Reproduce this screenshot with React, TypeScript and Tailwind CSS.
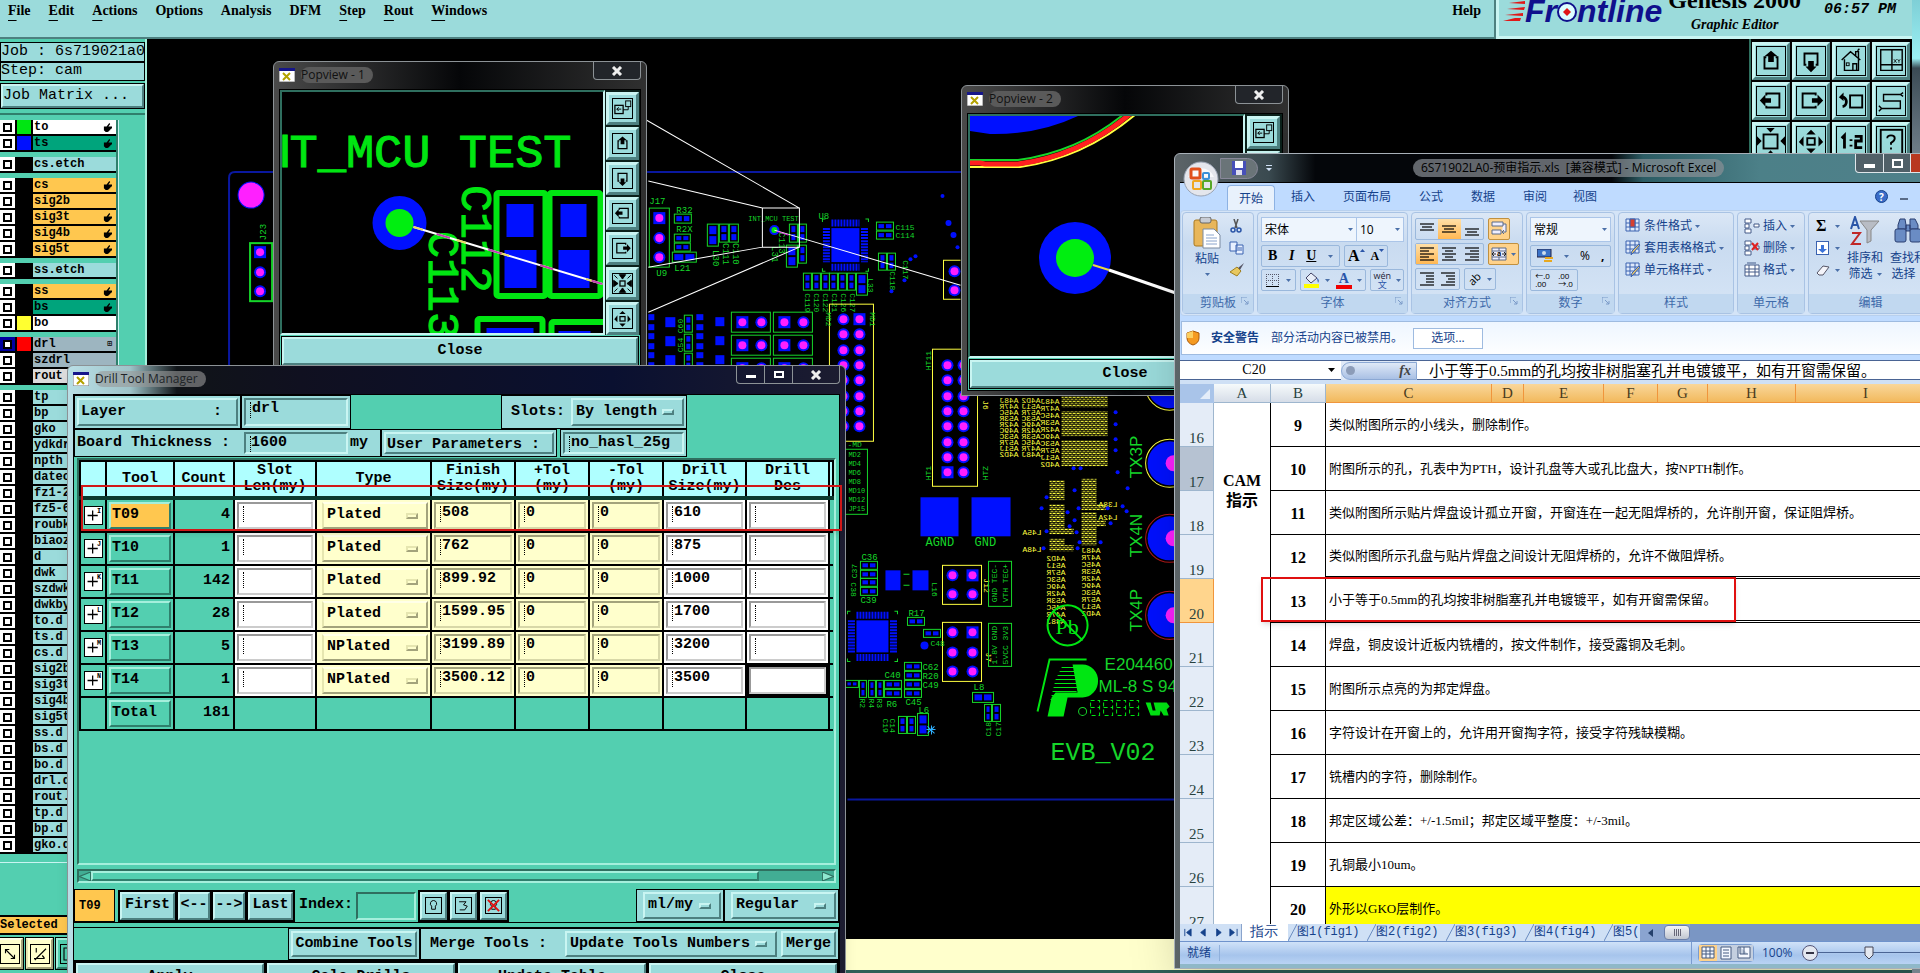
import type { ReactNode } from "react";

const raised =
  "border-2 border-t-[#c9f5f2] border-l-[#c9f5f2] border-b-[#4d8080] border-r-[#4d8080] bg-[#9bdbdb]";
const raisedTeal =
  "border-2 border-t-[#a5efdc] border-l-[#a5efdc] border-b-[#2f7f6c] border-r-[#2f7f6c] bg-[#53cfb0]";
const raisedCream =
  "border-2 border-t-[#ffffe8] border-l-[#e6e6b0] border-b-[#a3a37c] border-r-[#a3a37c] bg-[#ffffcc]";
const sunken =
  "border-2 border-t-[#4d8080] border-l-[#4d8080] border-b-[#c9f5f2] border-r-[#c9f5f2] bg-[#9bdbdb]";
const mono = "font-['Liberation_Mono',monospace]";
const song = "font-['Liberation_Serif','Noto_Sans_CJK_SC',serif]";
const yahei = "font-['Open_Sans','Noto_Sans_CJK_SC',sans-serif]";

const menus = [
  ["F", "ile"],
  ["E", "dit"],
  ["A", "ctions"],
  ["", "Options"],
  ["", "Analysis"],
  ["", "DFM"],
  ["S", "tep"],
  ["R", "out"],
  ["W", "indows"],
];

type Layer = { name: string; bg: string; swatch?: string; hand?: boolean; on?: boolean };

const white = "bg-white";
const green = "bg-[#00a47c]";
const aqua = "bg-[#9bdbdb]";
const orange = "bg-[#ffc74f]";
const gray = "bg-[#9db5c0]";

const layerGroups: Layer[][] = [
  [
    { name: "to", bg: white, swatch: "bg-[#00e612]", hand: true },
    { name: "ts", bg: green, swatch: "bg-[#0010ff]", hand: true },
  ],
  [{ name: "cs.etch", bg: aqua }],
  [
    { name: "cs", bg: orange, hand: true },
    { name: "sig2b", bg: orange },
    { name: "sig3t", bg: orange, hand: true },
    { name: "sig4b", bg: orange, hand: true },
    { name: "sig5t", bg: orange, hand: true },
  ],
  [{ name: "ss.etch", bg: aqua }],
  [
    { name: "ss", bg: orange, hand: true },
    { name: "bs", bg: green, hand: true },
    { name: "bo", bg: white, swatch: "bg-[#ffff30]" },
  ],
  [
    { name: "drl", bg: gray, swatch: "bg-[#ff0000]", on: true },
    { name: "szdrl", bg: gray },
    { name: "rout", bg: "bg-[#dcdcdc]" },
  ],
  [
    "tp", "bp", "gko", "ydkdr", "npth", "datecode", "fz1-2", "fz5-6", "roubk", "biaozhu",
    "d", "dwk", "szdwk", "dwkby", "to.d", "ts.d", "cs.d", "sig2b.d", "sig3t.d", "sig4b.d",
    "sig5t.d", "ss.d", "bs.d", "bo.d", "drl.d", "rout.d", "tp.d", "bp.d", "gko.d",
  ].map((name) => ({ name, bg: aqua })),
];

const tools = [
  { id: "T09", mark: "I", count: 4, type: "Plated", finish: "508", drill: "610" },
  { id: "T10", mark: "J", count: 1, type: "Plated", finish: "762", drill: "875" },
  { id: "T11", mark: "K", count: 142, type: "Plated", finish: "899.92", drill: "1000" },
  { id: "T12", mark: "L", count: 28, type: "Plated", finish: "1599.95", drill: "1700" },
  { id: "T13", mark: "M", count: 5, type: "NPlated", finish: "3199.89", drill: "3200" },
  { id: "T14", mark: "N", count: 1, type: "NPlated", finish: "3500.12", drill: "3500" },
];

const notes = [
  "类似附图所示的小线头，删除制作。",
  "附图所示的孔，孔表中为PTH，设计孔盘等大或孔比盘大，按NPTH制作。",
  "类似附图所示贴片焊盘设计孤立开窗，开窗连在一起无阻焊桥的，允许削开窗，保证阻焊桥。",
  "类似附图所示孔盘与贴片焊盘之间设计无阻焊桥的，允许不做阻焊桥。",
  "小于等于0.5mm的孔均按非树脂塞孔并电镀镀平，如有开窗需保留。",
  "焊盘，铜皮设计近板内铣槽的，按文件制作，接受露铜及毛刺。",
  "附图所示点亮的为邦定焊盘。",
  "字符设计在开窗上的，允许用开窗掏字符，接受字符残缺模糊。",
  "铣槽内的字符，删除制作。",
  "邦定区域公差：+/-1.5mil；邦定区域平整度：+/-3mil。",
  "孔铜最小10um。",
  "外形以GKO层制作。",
];

/* ---------- icons ---------- */

const glyphs: Record<string, ReactNode> = {
  up: (
    <>
      <path d="M10 11H8v12h14V11h-2" fill="none" strokeWidth="2" />
      <path d="M15 4 22 10H18v6h-6v-6H8z" fill="#000" stroke="none" />
    </>
  ),
  down: (
    <>
      <path d="M10 19H8V7h14v12h-2" fill="none" strokeWidth="2" />
      <path d="M15 27 21 21H18v-6h-6v6H9z" fill="#000" stroke="none" />
    </>
  ),
  left: (
    <>
      <path d="M10 9V7h14v15H10v-2" fill="none" strokeWidth="2" />
      <path d="M3 14.5 9 8v4h6v5H9v4z" fill="#000" stroke="none" />
    </>
  ),
  right: (
    <>
      <path d="M20 9V7H6v15h14v-2" fill="none" strokeWidth="2" />
      <path d="M28 14.5 22 8v4h-6v5h6v4z" fill="#000" stroke="none" />
    </>
  ),
  home: (
    <>
      <path d="M5 14 14.500 5 25 14M8 13v12h15V13M17 25v-7h4v7M20 9V5h3v7M22 4l2-2" fill="none" strokeWidth="1.5" />
      <rect x="10" y="17" width="3" height="3" fill="none" />
    </>
  ),
  xy: (
    <>
      <path d="M4 3h23v22H4zM16 3v22M4 19h23" fill="none" strokeWidth="1.5" />
      <path d="m18 13 3 4m0-4-3 4m4-4 1.500 2L25 13m-1.500 2v2" fill="none" strokeWidth=".8" />
    </>
  ),
  undo: (
    <>
      <rect x="14" y="9" width="13" height="13" fill="none" strokeWidth="2" />
      <path d="M5 11c6-1 7 9 1 10" fill="none" strokeWidth="3" />
      <path d="m2 11 5-5v9z" fill="#000" stroke="none" />
    </>
  ),
  snake: (
    <path d="M28 6 25 8H7v7h18v8H5l-3 3M25 8l3 2M5 23l-3-3" fill="none" strokeWidth="1.500" />
  ),
  shrink: (
    <>
      <rect x="7" y="8" width="15" height="15" fill="none" strokeWidth="2" />
      <path d="M10 1h9l-4.500 5zM10 30h9l-4.500-5zM0 10v10l5-5zM30 10v10l-5-5z" fill="#000" stroke="none" />
    </>
  ),
  expand: (
    <>
      <rect x="11" y="12" width="8" height="7" fill="none" strokeWidth="2" />
      <path d="M10 8h10l-5-5zM10 23h10l-5 5zM7 10v11l-5-5zM23 10v11l5-5z" fill="#000" stroke="none" />
    </>
  ),
  gather: (
    <>
      <rect x="11" y="11" width="8" height="8" fill="none" strokeWidth="2" />
      <path d="M10 1h10l-5 7zM10 29h10l-5-7zM1 10v10l7-5zM29 10v10l-7-5zM2 2l5 5M28 2l-5 5M2 28l5-5M28 28l-5-5" fill="#000" strokeWidth="1.500" />
    </>
  ),
  pop: (
    <>
      <rect x="3" y="10" width="13" height="13" fill="none" strokeWidth="2" />
      <rect x="20" y="3" width="8" height="9" fill="none" strokeWidth="1.500" />
      <path d="M16 17h8v-5M13 16H6m3-3-3 3 3 3" fill="none" strokeWidth="1.500" />
    </>
  ),
  question: (
    <>
      <rect x="4" y="3" width="23" height="26" fill="none" strokeWidth="2" />
      <path d="M11 12q0-3 4-3t4 3-4 5v2m0 3v2" fill="none" strokeWidth="2" />
    </>
  ),
  ratio: (
    <path d="m5 12 3-3v14M15 13v2m0 4v2M19 10h7v5h-6v7h7" fill="none" strokeWidth="3" />
  ),
};

function Glyph({ name, size }: { name: string; size: string }) {
  return (
    <svg viewBox="0 0 30 30" className={`${size} border border-black`} stroke="#000" strokeWidth="1">
      {glyphs[name]}
    </svg>
  );
}

function ToolButton({ name }: { name: string }) {
  return (
    <button aria-label={name} className={`flex h-[38px] w-[38px] items-center justify-center border-[3px] ${raised}`}>
      <Glyph name={name} size="h-[30px] w-[30px]" />
    </button>
  );
}

function PopButton({ name }: { name: string }) {
  return (
    <button aria-label={name} className={`flex h-[33px] w-[33px] items-center justify-center border-[3px] ${raised}`}>
      <Glyph name={name} size="h-[21px] w-[21px]" />
    </button>
  );
}

function XIcon() {
  return (
    <svg viewBox="0 0 16 14" className="h-[14px] w-4 shrink-0">
      <rect width="16" height="14" fill="#fff" stroke="#777" />
      <rect width="16" height="3" fill="#16168a" />
      <path d="m4 5 7 7M11 5l-7 7" stroke="#b3a200" strokeWidth="2" />
    </svg>
  );
}

/* ---------- board drawing ---------- */

const G = "#16d62a";
const B = "#0010ff";
const M = "#ff20ff";
const Y = "#ffff40";

function Pad({ x, y, sq }: { x: number; y: number; sq?: boolean }) {
  return (
    <g>
      {sq ? <rect x={x - 6} y={y - 6} width="12" height="12" fill={B} /> : <circle cx={x} cy={y} r="6" fill={B} />}
      <circle cx={x} cy={y} r="4" fill={M} />
    </g>
  );
}

// component outline with two copper pads, stacked when taller than wide
function Cap({ x, y, w, h }: { x: number; y: number; w: number; h: number }) {
  const tall = h > w;
  const pw = tall ? w - 4 : w / 2 - 3;
  const ph = tall ? h / 2 - 3 : h - 4;
  return (
    <g>
      <rect x={x} y={y} width={w} height={h} fill="none" stroke={G} />
      <rect x={x + 2} y={y + 2} width={pw} height={ph} fill={B} />
      <rect x={tall ? x + 2 : x + w / 2 + 1} y={tall ? y + h / 2 + 1 : y + 2} width={pw} height={ph} fill={B} />
    </g>
  );
}

function Label({ x, y, t, r = 0, s = 9, c = G }: { x: number; y: number; t: string; r?: number; s?: number; c?: string }) {
  return (
    <text x={x} y={y} fill={c} fontSize={s} fontFamily="Liberation Mono, monospace" transform={r ? `rotate(${r} ${x} ${y})` : undefined}>
      {t}
    </text>
  );
}

function Flipped({ x, y, t }: { x: number; y: number; t: string }) {
  return (
    <text transform={`translate(${x} ${y}) scale(-1 1)`} fill={Y} fontSize="8" fontFamily="Liberation Mono, monospace">
      {t}
    </text>
  );
}

function Chip({ x, y, w, h }: { x: number; y: number; w: number; h: number }) {
  return (
    <g>
      <rect x={x} y={y} width={w} height={h} fill={B} />
      <path d={`M${x} ${y - 5}h${w}M${x} ${y + h + 5}h${w}`} stroke={B} strokeWidth="7" strokeDasharray="2 1" />
      <path d={`M${x - 5} ${y}v${h}M${x + w + 5} ${y}v${h}`} stroke={B} strokeWidth="7" strokeDasharray="2 1" />
      <path
        d={`M${x - 9} ${y - 6}v-3h3M${x + w + 9} ${y - 6}v-3h-3M${x - 9} ${y + h + 6}v3h3M${x + w + 9} ${y + h + 6}v3h-3`}
        stroke={G}
        fill="none"
      />
    </g>
  );
}

function Board() {
  const eight = [0, 15, 31, 46, 61, 77, 92, 107];
  const dots = [
    [942, 196, 2], [948, 223, 3], [953, 235, 3], [957, 247, 2], [915, 256, 2], [910, 259, 2],
    [904, 280, 2], [891, 291, 2], [1115, 412, 2], [1115, 424, 2], [1115, 439, 2], [1115, 450, 2],
    [1117, 472, 2], [1127, 488, 2], [1073, 468, 2], [1080, 468, 2], [1074, 490, 2], [1046, 497, 2],
    [1041, 508, 2], [1067, 512, 2], [1078, 508, 2], [1074, 520, 2], [1069, 526, 2], [1076, 532, 2],
    [1079, 542, 2], [1100, 542, 2], [1110, 523, 2], [1107, 508, 2], [1122, 506, 2], [1126, 511, 2],
    [1046, 531, 2], [1043, 548, 2], [1077, 548, 2],
  ];
  const refs = ["A48J", "A47R", "A45C", "A53R", "A42R", "A49C", "A53C", "A57R", "A51J", "A4D2"];
  return (
    <svg viewBox="147 39 1601 900" preserveAspectRatio="xMinYMin slice" className="h-full w-full">
      <defs>
        <pattern id="hatch" width="4" height="4" patternUnits="userSpaceOnUse">
          <path d="M0 1h3M2 3h2M0 3h1" stroke={Y} strokeWidth="1" />
        </pattern>
      </defs>
      <path d="M229 939V178q0-6 6-6H1400M847 799H1400" fill="none" stroke="#0a18a0" strokeWidth="2" />
      <circle cx="251" cy="195" r="13" fill={M} stroke={B} />
      <Label x={266} y={240} t="J23" r={-90} s={9} />
      <rect x="250" y="243" width="22" height="58" fill="none" stroke={G} strokeWidth="2" />
      <Pad x={260} y={252} sq />
      <Pad x={260} y={272} />
      <Pad x={260} y={291} />

      <Label x={649} y={204} t="J17" />
      <rect x="649" y="208" width="20" height="59" fill="none" stroke={G} />
      <Pad x={659} y={218} sq />
      <Pad x={659} y={238} />
      <Pad x={659} y={257} />
      <Label x={656} y={276} t="U9" />
      <Label x={676} y={213} t="R32" />
      <Cap x={674} y={214} w={17} h={9} />
      <Label x={676} y={232} t="R2X" />
      <Cap x={674} y={234} w={16} h={8} />
      <Cap x={674} y={243} w={16} h={8} />
      <Cap x={672} y={252} w={24} h={10} />
      <Label x={674} y={271} t="L21" />
      <Cap x={707} y={224} w={11} h={22} />
      <Cap x={719} y={224} w={9} h={18} />
      <Cap x={729} y={224} w={9} h={18} />
      <Label x={713} y={250} t="L30" r={90} />
      <Label x={723} y={243} t="C111" r={90} />
      <Label x={733} y={243} t="C110" r={90} />
      <Label x={748} y={221} t="INT_MCU TEST" s={7} />
      <Label x={818} y={219} t="U8" />
      <circle cx="774" cy="230" r="5" fill={B} />
      <circle cx="774" cy="230" r="3" fill="#00e612" />
      <Cap x={789} y={224} w={8} h={18} />
      <Cap x={798} y={224} w={8} h={18} />
      <Cap x={786} y={245} w={11} h={22} />
      <Cap x={798} y={245} w={8} h={18} />
      <Label x={779} y={232} t="C113" r={90} />
      <Label x={772} y={246} t="L31" r={90} />
      <Chip x={831} y={228} w={28} h={34} />
      <Cap x={876} y={222} w={17} h={8} />
      <Cap x={876} y={231} w={17} h={8} />
      <Label x={895} y={230} t="C115" s={8} />
      <Label x={895} y={238} t="C114" s={8} />
      <Cap x={878} y={253} w={8} h={17} />
      <Cap x={887} y={253} w={8} h={17} />
      <Label x={890} y={271} t="C118" s={8} r={90} />
      <Label x={903} y={260} t="C117" s={8} r={90} />
      {[803, 812, 821, 829, 838, 847].map((x) => (
        <Cap key={x} x={x} y={273} w={8} h={17} />
      ))}
      <Cap x={856} y={273} w={11} h={22} />
      <Label x={868} y={278} t="L33" s={8} r={90} />
      {["C119", "C120", "C122", "C121", "C126", "C127"].map((t, i) => (
        <Label key={t} x={805 + i * 9} y={293} t={t} s={8} r={90} />
      ))}

      {[317, 336, 355].map((y) => (
        <g key={y}>
          <rect x="648" y={y - 3} width="6" height="6" fill={B} />
          <rect x="648" y={y + 7} width="6" height="6" fill={B} />
          <rect x="665" y={y} width="10" height="10" fill={B} />
          <Cap x={684} y={y - 2} w={8} h={17} />
          <rect x="696" y={y - 3} width="7" height="6" fill={B} />
          <rect x="696" y={y + 7} width="7" height="6" fill={B} />
          <rect x="715" y={y} width="9" height="9" fill={B} />
        </g>
      ))}
      <Label x={683} y={333} t="C60" s={8} r={-90} />
      <Label x={683} y={352} t="C54" s={8} r={-90} />
      {[322, 345, 368].map((y) => (
        <g key={y}>
          <rect x="731" y={y - 10} width="39" height="20" fill="none" stroke={G} />
          <rect x="773" y={y - 10} width="39" height="20" fill="none" stroke={G} />
          <Pad x={742} y={y} sq />
          <Pad x={761} y={y} />
          <Pad x={784} y={y} sq />
          <Pad x={803} y={y} />
        </g>
      ))}
      <rect x="829" y="304" width="44" height="137" fill="none" stroke={Y} />
      {eight.map((d, i) => (
        <g key={d}>
          <Pad x={843} y={319 + d} />
          <Pad x={859} y={319 + d} sq={i === 0} />
          <Pad x={947} y={365 + d} sq={i === 7} />
          <Pad x={963} y={365 + d} />
        </g>
      ))}
      <Label x={826} y={312} t="MD2" s={8} r={90} />
      <Label x={870} y={312} t="MD1" s={8} r={90} />
      <Label x={847} y={447} t="-MD" s={8} />
      <rect x="845" y="449" width="22" height="65" fill="none" stroke={G} />
      {["MD2", "MD4", "MD6", "MD8", "MD10", "MD12", "JP15"].map((t, i) => (
        <Label key={t} x={848} y={457 + i * 9} t={t} s={7} />
      ))}
      <rect x="932" y="349" width="45" height="137" fill="none" stroke={Y} />
      <Label x={931} y={370} t="HT11" s={8} r={-90} />
      <Label x={931} y={480} t="HT1" s={8} r={-90} />
      <Label x={987} y={480} t="HTZ" s={8} r={-90} />
      <Label x={982} y={400} t="J6" s={8} r={90} c={Y} />
      <path d="M960 260H943v39h17" fill="none" stroke={Y} />
      <Pad x={954} y={271} />
      <Pad x={954} y={290} />

      <rect x="920" y="497" width="38" height="39" fill={B} />
      <rect x="971" y="497" width="39" height="39" fill={B} />
      <Label x={925} y={546} t="AGND" s={12} />
      <Label x={974} y={546} t="GND" s={12} />

      <Label x={861} y={560} t="C36" />
      {[561, 570, 578, 587].map((y) => (
        <Cap key={y} x={860} y={y} w={17} h={8} />
      ))}
      <Label x={860} y={603} t="C39" />
      <Label x={857} y={578} t="C37" s={8} r={-90} />
      <Label x={851} y={582} t="C38" s={8} r={90} />
      <rect x="885" y="570" width="15" height="20" fill={B} />
      <rect x="912" y="570" width="16" height="20" fill={B} />
      <path d="M903 574h6M903 585h6" stroke={G} />
      <Label x={932} y={582} t="L16" s={8} r={90} />
      <rect x="942" y="565" width="39" height="39" fill="none" stroke={Y} />
      <Pad x={952} y={575} />
      <Pad x={972} y={575} sq />
      <Pad x={952} y={594} />
      <Pad x={972} y={594} />
      <rect x="942" y="622" width="39" height="59" fill="none" stroke={Y} />
      {[632, 652, 671].map((y) => (
        <g key={y}>
          <Pad x={952} y={y} />
          <Pad x={972} y={y} sq={y === 632} />
        </g>
      ))}
      <Label x={983} y={578} t="J12" s={8} r={90} c={Y} />
      <Label x={985} y={652} t="J7" s={8} r={90} c={Y} />
      <rect x="988" y="561" width="23" height="45" fill="none" stroke={G} />
      <Label x={996} y={602} t="GND TEC-" s={8} r={-90} />
      <Label x={1007} y={602} t="VTH TEC+" s={8} r={-90} />
      <rect x="988" y="623" width="23" height="43" fill="none" stroke={G} />
      <Label x={996} y={664} t="1.8V GND" s={8} r={-90} />
      <Label x={1007} y={664} t="5VCC 3V3" s={8} r={-90} />

      <Chip x={856} y={620} w={32} h={32} />
      <Label x={908} y={616} t="R17" />
      <Cap x={907} y={617} w={17} h={8} />
      <Cap x={923} y={629} w={17} h={8} />
      <circle cx="924" cy="645" r="4" fill={B} />
      <Label x={930} y={646} t="C48" s={8} />
      {[662, 671, 680, 689].map((y) => (
        <Cap key={y} x={904} y={y} w={17} h={8} />
      ))}
      <Label x={922} y={670} t="C62" />
      <Label x={922} y={679} t="R20" />
      <Label x={922} y={688} t="C49" />
      <Label x={905} y={705} t="C45" />
      <Label x={884} y={678} t="C40" />
      <Label x={886} y={707} t="R6" />
      <Cap x={884} y={680} w={17} h={8} />
      <Cap x={884} y={689} w={17} h={8} />
      {[859, 868, 876].map((x, i) => (
        <g key={x}>
          <Cap x={x} y={680} w={7} h={17} />
          <Label x={x + 1} y={698} t={["R2", "R4", "R3"][i]} s={8} r={90} />
        </g>
      ))}
      <Cap x={845} y={680} w={13} h={7} />
      <Cap x={898} y={716} w={8} h={17} />
      <Cap x={907} y={716} w={8} h={17} />
      <Cap x={917} y={713} w={11} h={22} />
      <Label x={918} y={713} t="L6" />
      <Label x={883} y={718} t="C19" s={8} r={90} />
      <Label x={890} y={718} t="C14" s={8} r={90} />
      <path d="m927 726 7 7m0-7-7 7m-1-4h9m-4-4v9" stroke="#30b0ff" />
      <Label x={973} y={690} t="L8" />
      <Cap x={972} y={692} w={21} h={10} />
      <Cap x={984} y={704} w={7} h={17} />
      <Cap x={992} y={704} w={8} h={17} />
      <Label x={990} y={736} t="C18" s={8} r={-90} />
      <Label x={1000} y={736} t="C17" s={8} r={-90} />

      {refs.map((t, i) => (
        <g key={t}>
          <Flipped x={1018} y={403 + i * 6} t={t} />
          <Flipped x={1040} y={403 + i * 6} t={refs[9 - i]} />
          <Flipped x={1065} y={561 + i * 7} t={refs[9 - i]} />
          <Flipped x={1100} y={553 + i * 7} t={t} />
        </g>
      ))}
      {refs.map((t, i) => (
        <Flipped key={t} x={1059} y={404 + i * 7} t={t} />
      ))}
      <path d="M1061 386h46v21h-46zM1061 411h46v25h-46zM1061 440h46v26h-46zM1049 480h15v20h-15zM1049 504h15v24h9v6h-24zM1049 538h15v7h9v6h-24zM1081 478h15v26h9v6h-24zM1081 512h15v8h9v6h-9v19h-15z" fill="url(#hatch)" />
      <Flipped x={1117} y={507} t="L38A" />
      <Flipped x={1117} y={520} t="L42A" />
      <Flipped x={1041} y={535} t="L45A" />
      <Flipped x={1041} y={552} t="L48A" />
      {dots.map(([x, y, r], i) => (
        <circle key={i} cx={x} cy={y} r={r} fill={B} />
      ))}

      {[386, 463, 538, 615].map((y, i) => (
        <g key={y}>
          <circle cx="1169" cy={y} r="22" fill={B} />
          <circle cx="1169" cy={y} r="24" fill="none" stroke={i < 2 ? Y : "#b01818"} />
          <circle cx="1173" cy={y} r="8" fill={M} />
        </g>
      ))}
      <g fill={G} fontFamily="Liberation Sans, sans-serif" fontSize="17">
        <text x="1141" y="478" transform="rotate(-90 1141 478)">TX3P</text>
        <text x="1141" y="557" transform="rotate(-90 1141 557)">TX4N</text>
        <text x="1141" y="631" transform="rotate(-90 1141 631)">TX4P</text>
        <text x="1104" y="670">E204460</text>
        <text x="1098" y="692">ML-8 S 94</text>
      </g>
      <circle cx="1067" cy="625" r="20" fill="none" stroke="#00e612" strokeWidth="2" />
      <path d="m1053 611 29 29" stroke="#00e612" strokeWidth="2" />
      <text x="1055" y="634" fill="#00e612" fontSize="22" fontFamily="Liberation Serif, serif">Pb</text>
      <path d="M1037 711 1049 659H1086" fill="none" stroke="#00e612" strokeWidth="2" />
      <path d="M1072 664h10a15 16 0 0 1 0 33h-15l-4 19h-16l4-19 4-5h22z" fill="#00e612" />
      <path d="M1061 667h18M1059 671h20M1057 675h22M1055 679h24M1054 683h24M1053 687h24M1052 691h24M1051 695h14M1050 699h12" stroke="#00e612" />
      <g fill="none" stroke="#00e612" strokeDasharray="4 3">
        {[1090, 1103, 1116, 1129].map((x) => (
          <path key={x} d={`M${x} 700h9v15h-9zM${x} 707h9`} />
        ))}
      </g>
      <circle cx="1082" cy="711" r="4" fill="none" stroke={G} />
      <path d="M1145 702h5l2 8h3l-2-8h13l3 4-3 3 2 6h-5l-3-5-1 5h-9z" fill="#00e612" />
      <Label x={1050} y={760} t="EVB_V02" s={25} />

      <path d="M762 208h37v39h-37zM648 181l114 27M646 120l153 88M648 267l114-20M648 312l151-65M774 230l186 55" fill="none" stroke="#fff" />
      <path d="m776 231 12 4" stroke={M} />
    </svg>
  );
}

/* ---------- editor shell ---------- */

function Hand() {
  return (
    <svg viewBox="0 0 10 10" className="h-[9px] w-[9px]">
      <path d="M1 4h3l3-4 1 1-2 3h4v2H9v1H8v1H7v1L5 10H3L1 8z" />
    </svg>
  );
}

function Layers() {
  return (
    <div className="flex">
      <div className="flex w-[116px] flex-col gap-[5px] overflow-hidden">
        {layerGroups.map((group, g) => (
          <ul key={g} className="bg-black">
            {group.map((l) => (
              <li key={l.name} className="flex h-4 items-stretch border-b-2 border-black">
                <button
                  aria-label={l.name}
                  className={`flex w-[15px] items-center justify-center ${l.on ? "bg-[#0000a0]" : "bg-white"}`}
                >
                  <span className="h-[9px] w-[9px] border-2 border-black bg-white" />
                </button>
                <span className={`mx-[2px] w-[14px] ${l.swatch ?? "bg-black"}`} />
                <span className={`flex flex-1 items-center justify-between pr-1 pl-[1px] text-xs leading-none font-bold ${mono} ${l.bg}`}>
                  {l.name}
                  {l.hand && <Hand />}
                  {l.on && <span className="text-[8px]">⊞</span>}
                </span>
              </li>
            ))}
          </ul>
        ))}
      </div>
      <div className="w-[3px] border-r border-[#c9f5f2] bg-[#2f7f6c]" />
    </div>
  );
}

function Sidebar() {
  return (
    <aside className={`flex w-[147px] shrink-0 flex-col border-r-2 border-[#a5efdc] bg-[#53cfb0] pt-[3px] text-[15px] ${mono}`}>
      <div className="flex h-5 items-center border border-black bg-[#9bdbdb] whitespace-pre">Job : 6s719021a0</div>
      <div className="flex h-[19px] items-center border border-black bg-[#9bdbdb]">Step: cam</div>
      <div className="mt-[2px] border border-black">
        <button className={`flex h-6 w-full items-center ${raised}`}>Job Matrix ...</button>
      </div>
      <div className="mt-1 mb-[5px] h-[2px] bg-[#2f7f6c]" />
      <Layers />
      <div className="mt-2 h-px bg-[#c9f5f2]" />
      <div className="mt-auto flex h-5 items-center border-y-2 border-black bg-[#ffc74f] text-xs leading-none font-bold whitespace-pre">
        Selected :
      </div>
      <div className="mt-[3px] mb-[3px] -ml-1 flex h-[32px] gap-[3px]">
        {["M6 6 18 18M6 11V6h5M18 13v5h-5", "M4 18h14M5 20 20 5M7 4v6m8 4q2 2 3 4", "M4 4h16v16H4z", "M4 4h16v16H4z"].map((d, i) => (
          <button
            key={i}
            aria-label={`Select mode ${i + 1}`}
            className={`flex h-[31px] w-[27px] shrink-0 items-center justify-center outline outline-black ${i < 2 ? raisedCream : raisedTeal}`}
          >
            <svg viewBox="0 0 24 24" className="h-5 w-5 border border-black" fill="none" stroke="#000" strokeWidth="1.500">
              <path d={d} />
            </svg>
          </button>
        ))}
      </div>
    </aside>
  );
}

function Header() {
  return (
    <header className="flex h-[39px] shrink-0 bg-[#9bdbdb] font-['Liberation_Serif',serif] text-sm font-bold">
      <nav className="flex flex-1 items-start gap-[18px] border-r-2 border-b-2 border-[#4d8080] pt-[1px] pl-2 leading-[19px]">
        {menus.map(([u, rest]) => (
          <button key={rest}>
            <span className="underline underline-offset-[5px]">{u}</span>
            {rest}
          </button>
        ))}
        <button className="mr-[13px] ml-auto">Help</button>
      </nav>
      <div className="flex w-[416px] items-start gap-[6px] overflow-hidden border-b-[3px] border-l-[3px] border-[#c9f5f2] pl-1">
        <div className="flex items-start">
          <svg viewBox="0 0 22 22" className="h-[22px] w-[22px]" fill="#e01818">
            <path d="M0 21h17l1-3H12zM2 15l18 1v-3zM4 9l17 1 1-3zM6 3l16 1V1z" />
          </svg>
          <span className="-mt-[8px] flex items-baseline font-['Liberation_Sans',sans-serif] text-[32px] leading-[38px] text-[#10108c] italic">
            Fr
            <svg viewBox="0 0 20 20" className="h-[20px] w-[20px]">
              <circle cx="10" cy="10" r="9" fill="#dff" stroke="#10108c" strokeWidth="2" />
              <path d="m10 6 4 4-4 4-4-4z" fill="#e01818" />
            </svg>
            ntline
          </span>
        </div>
        <div className="-mt-[14px] text-center">
          <div className="text-2xl leading-[28px]">Genesis 2000</div>
          <div className="text-sm leading-[22px] italic">Graphic Editor</div>
        </div>
        <div className={`ml-auto pr-4 text-[15px] leading-5 italic ${mono}`}>06:57 PM</div>
      </div>
    </header>
  );
}

function Frame({ title, className, light, children, buttons }: { title: string; className: string; light?: boolean; children: ReactNode; buttons: ReactNode }) {
  return (
    <section
      className={`absolute flex flex-col rounded-t-md border border-[#8c9296] px-[5px] pb-[5px] shadow-lg ${
        light ? "bg-[linear-gradient(90deg,#b9dfe6_0,#9ec3c8_8%,#101418_14%,#101020_30%,#0a1030_70%,#1c1c30_100%)]" : "bg-[linear-gradient(90deg,#4a4a4a,#050608_50%,#303030)]"
      } ${className}`}
    >
      <div className={`flex shrink-0 items-start justify-between ${light ? "h-7" : "h-[27px]"}`}>
        <h2
          className={`flex items-center gap-[6px] pt-[5px] text-xs leading-4 font-['Open_Sans',sans-serif] ${
            light ? "text-[#202428]" : "text-[#b8b8b8]"
          }`}
        >
          <XIcon />
          <span className={light ? "rounded-lg bg-[#9a9a9a]/60 pr-2" : "rounded-lg bg-[#5a5a5a] pr-2 text-[#111]"}>{title}</span>
        </h2>
        {buttons}
      </div>
      {children}
    </section>
  );
}

function CloseX() {
  return (
    <svg viewBox="0 0 12 10" className="h-[10px] w-3">
      <path d="m2 1 8 8M10 1 2 9" stroke="#eee" strokeWidth="3" />
    </svg>
  );
}

const closeBtn =
  "flex h-[18px] w-12 items-center justify-center rounded-b border border-t-0 border-[#8c9296] bg-[#22252a]";

function PopviewOne() {
  return (
    <Frame
      title="Popview - 1"
      className="top-[61px] left-[273px] h-[320px] w-[374px]"
      buttons={<button aria-label="Close window" className={closeBtn}><CloseX /></button>}
    >
      <div className="flex flex-1 flex-col border border-black bg-[#53cfb0]">
        <div className="flex">
          <svg viewBox="282 92 320 241" className="h-[245px] flex-1 border-2 border-t-[#2f6f5f] border-r-[#c9f5f2] border-b-[#c9f5f2] border-l-[#2f6f5f] bg-black">
            <g fill="#00e612" stroke="#00e612" fontSize="47" fontFamily="Liberation Mono, monospace">
              <text x="278" y="167" fontFamily="Liberation Sans, sans-serif">I</text>
              <text x="289" y="167">T_MCU TEST</text>
              <text x="461" y="185" fontSize="45" transform="rotate(90 461 185)">C112</text>
              <text x="428" y="231" fontSize="45" transform="rotate(90 428 231)">C113</text>
            </g>
            <circle cx="399" cy="223" r="27" fill={B} />
            <circle cx="399" cy="223" r="14" fill="#00ee10" />
            <g fill={B}>
              <rect x="506" y="204" width="27" height="33" />
              <rect x="560" y="204" width="26" height="33" />
              <rect x="504" y="250" width="32" height="38" />
              <rect x="558" y="250" width="31" height="38" />
              <rect x="486" y="328" width="47" height="6" />
              <rect x="558" y="331" width="32" height="6" />
            </g>
            <g fill="none" stroke="#00e612" strokeWidth="6">
              <rect x="496" y="193" width="49" height="103" rx="2" />
              <rect x="549" y="193" width="51" height="103" rx="2" />
              <rect x="477" y="319" width="65" height="40" rx="2" />
              <rect x="551" y="322" width="60" height="40" rx="2" />
            </g>
            <path d="m413 227 189 57" stroke="#fff" strokeWidth="2" />
            <path d="m413 227 189 57" stroke="#e8d860" strokeWidth="2" strokeDasharray="10 35" />
            <path d="m436 234 166 50" stroke="#c040b0" strokeWidth="2" strokeDasharray="14 40" />
          </svg>
          <div className="flex flex-col gap-[2px] bg-[#0a201a] px-[1px] pt-[2px]">
            {["pop", "up", "down", "left", "right", "gather", "expand"].map((n) => (
              <PopButton key={n} name={n} />
            ))}
          </div>
        </div>
        <button className={`m-[2px] h-7 text-[15px] font-bold outline outline-black ${mono} ${raised}`}>Close</button>
      </div>
    </Frame>
  );
}

function PopviewTwo() {
  return (
    <Frame
      title="Popview - 2"
      className="top-[85px] left-[961px] h-[311px] w-[328px]"
      buttons={<button aria-label="Close window" className={closeBtn}><CloseX /></button>}
    >
      <div className="flex flex-1 flex-col border border-black bg-[#53cfb0]">
        <div className="flex">
          <svg viewBox="970 118 273 240" className="h-[244px] flex-1 border-2 border-t-[#2f6f5f] border-r-[#c9f5f2] border-b-[#c9f5f2] border-l-[#2f6f5f] bg-black">
            <path d="M970 118H1078Q1038 137 990 136L970 133z" fill={B} />
            <path d="M968 162H1018Q1078 154 1124 116" fill="none" stroke={G} strokeWidth="2" />
            <path d="M968 169H1020Q1084 160 1136 116" fill="none" stroke={Y} strokeWidth="2" />
            <path d="M968 165H980L985 166H1018Q1080 158 1130 116" fill="none" stroke="#ff2020" strokeWidth="5" />
            <circle cx="1075" cy="260" r="36" fill={B} />
            <circle cx="1075" cy="260" r="19" fill="#00ee10" />
            <path d="m1093 267 16 5" stroke="#e8d840" strokeWidth="2" />
            <path d="m1109 272 90 31" stroke="#fff" strokeWidth="3" />
          </svg>
          <div className="flex flex-col gap-[2px] bg-[#0a201a] px-[2px] pt-[2px]">
            <PopButton name="pop" />
            <PopButton name="up" />
          </div>
        </div>
        <button className={`m-[2px] h-7 text-[15px] font-bold outline outline-black ${mono} ${raised}`}>Close</button>
      </div>
    </Frame>
  );
}

/* ---------- drill tool manager ---------- */

function Motif({ label, value, className, mark = "border-[#c9f5f2] border-r-[#4d8080] border-b-[#4d8080]" }: { label: string; value: string; className: string; mark?: string }) {
  return (
    <span className={`flex items-center pr-2 ${className}`}>
      <select aria-label={label} defaultValue={value} className="min-w-0 flex-1 appearance-none bg-transparent pl-[3px] outline-none">
        <option>{value}</option>
      </select>
      <span className={`h-[6px] w-3 border-2 ${mark}`} />
    </span>
  );
}

function Field({ label, value, className, caret = true }: { label: string; value: string; className: string; caret?: boolean }) {
  return (
    <span className={`flex items-start ${className}`}>
      {caret && <span className="mt-[2px] ml-1 h-4 w-[2px] shrink-0 border-l border-dotted border-black" />}
      <input aria-label={label} defaultValue={value} className="h-[18px] w-full min-w-0 bg-transparent outline-none" />
    </span>
  );
}

const cream = "border-2 border-t-[#a3a37c] border-l-[#a3a37c] border-b-[#d8d8a8] border-r-[#d8d8a8] bg-[#ffffcc]";
const paper = "border-2 border-t-[#999] border-l-[#999] border-b-[#ccc] border-r-[#ccc] bg-white";

function DrillTable() {
  const heads = ["", "Tool", "Count", "Slot\nLen(my)", "Type", "Finish\nSize(my)", "+Tol\n(my)", "-Tol\n(my)", "Drill\nSize(my)", "Drill\nDes", "("];
  return (
    <table className="w-full table-fixed border-collapse">
      <colgroup>
        <col className="w-[26px]" />
        <col className="w-[68px]" />
        <col className="w-[60px]" />
        <col className="w-[82px]" />
        <col className="w-[115px]" />
        <col className="w-[84px]" />
        <col className="w-[74px]" />
        <col className="w-[74px]" />
        <col className="w-[83px]" />
        <col className="w-[83px]" />
        <col />
      </colgroup>
      <thead>
        <tr className="h-[37px]">
          {heads.map((h, i) => (
            <th key={i} className="overflow-hidden border-2 border-b-4 border-black border-b-[#0b3a2e] bg-[#afffff] p-0 leading-[16px] whitespace-pre">
              {h}
            </th>
          ))}
        </tr>
      </thead>
      <tbody>
        {tools.map((t, i) => (
          <tr key={t.id} className="h-[33px]">
            <td className="border-2 border-black p-0">
              <svg viewBox="0 0 20 20" className="mx-auto h-[19px] w-[19px] border border-black bg-white" stroke="#000" strokeWidth="1.500">
                <path d="M3 10h12M9 4v12" />
                <text x="14" y="7" fontSize="8" strokeWidth="0">{t.mark}</text>
              </svg>
            </td>
            <td className="border-2 border-black p-[2px]">
              <button className={`h-[27px] w-full pl-[1px] text-left ${raisedTeal} ${i === 0 ? "!bg-[#ffc74f]" : ""}`}>{t.id}</button>
            </td>
            <td className="border-2 border-black p-0 pr-[3px] text-right">{t.count}</td>
            <td className="border-2 border-black bg-white p-[2px]">
              <Field label={`${t.id} slot length`} value="" className={`h-[27px] ${paper}`} />
            </td>
            <td className="border-2 border-black bg-[#ffffcc] p-[2px] pl-[5px]">
              <Motif label={`${t.id} type`} value={t.type} mark="border-[#e6e6b0] border-r-[#a3a37c] border-b-[#a3a37c]" className={`h-[27px] ${raisedCream}`} />
            </td>
            <td className="border-2 border-black bg-[#ffffcc] p-[2px]">
              <Field label={`${t.id} finish size`} value={t.finish} className={`h-[27px] ${cream}`} />
            </td>
            <td className="border-2 border-black bg-[#ffffcc] p-[2px]">
              <Field label={`${t.id} plus tolerance`} value="0" className={`h-[27px] ${cream}`} />
            </td>
            <td className="border-2 border-black bg-[#ffffcc] p-[2px]">
              <Field label={`${t.id} minus tolerance`} value="0" className={`h-[27px] ${cream}`} />
            </td>
            <td className="border-2 border-black bg-white p-[2px]">
              <Field label={`${t.id} drill size`} value={t.drill} className={`h-[27px] ${paper}`} />
            </td>
            <td className={`border-2 border-black p-[2px] ${i === 5 ? "bg-black" : "bg-white"}`}>
              <Field label={`${t.id} designation`} value="" caret={i !== 5} className={`h-[27px] ${paper}`} />
            </td>
            <td className="border-2 border-r-0 border-black" />
          </tr>
        ))}
        <tr className="h-[33px]">
          <td className="border-2 border-black" />
          <td className="border-2 border-black p-[2px]">
            <button className={`h-[27px] w-full pl-[1px] text-left ${raisedTeal}`}>Total</button>
          </td>
          <td className="border-2 border-black p-0 pr-[3px] text-right">181</td>
          {heads.slice(3).map((_, i) => (
            <td key={i} className="border-2 border-black last:border-r-0" />
          ))}
        </tr>
      </tbody>
    </table>
  );
}

function DrillManager() {
  const box = "border border-black bg-[#9bdbdb] p-[2px]";
  const nav = `h-7 whitespace-nowrap ${raised}`;
  return (
    <Frame
      light
      title="Drill Tool Manager"
      className="top-[365px] left-[67px] h-[640px] w-[779px]"
      buttons={
        <div className="flex rounded-b border border-t-0 border-[#8c9296]">
          <button aria-label="Minimize" className="flex h-[17px] w-7 items-center justify-center border-r border-[#8c9296]">
            <span className="mt-1 h-[3px] w-[10px] bg-white" />
          </button>
          <button aria-label="Maximize" className="flex h-[17px] w-7 items-center justify-center border-r border-[#8c9296]">
            <span className="h-[7px] w-[10px] border-2 border-white" />
          </button>
          <button aria-label="Close window" className="flex h-[17px] w-[46px] items-center justify-center">
            <CloseX />
          </button>
        </div>
      }
    >
      <div className={`flex flex-1 flex-col border border-black bg-[#53cfb0] text-[15px] font-bold ${mono}`}>
        <div className="flex h-[34px]">
          <div className={`w-[167px] ${box}`}>
            <button className={`flex h-full w-full items-center justify-between pr-[14px] pl-[2px] ${raised}`}>
              <span>Layer</span>
              <span>:</span>
            </button>
          </div>
          <div className={`w-[110px] ${box}`}>
            <Field label="Layer" value="drl" className={`h-full ${sunken}`} />
          </div>
          <div className={`ml-[150px] flex w-[186px] items-center ${box}`}>
            <span className="w-[67px] pl-[7px]">Slots:</span>
            <Motif label="Slots" value="By length" className={`h-full flex-1 ${raised}`} />
          </div>
        </div>
        <div className="flex h-[28px]">
          <div className={`flex w-[307px] items-center gap-[2px] ${box}`}>
            <label htmlFor="thickness" className="w-[165px] whitespace-nowrap">Board Thickness :</label>
            <span className={`flex h-full w-[104px] items-start ${sunken}`}>
              <span className="mt-[2px] ml-1 h-4 border-l border-dotted border-black" />
              <input id="thickness" defaultValue="1600" className="h-[18px] w-full bg-transparent outline-none" />
            </span>
            <span>my</span>
          </div>
          <div className={`w-[176px] ${box}`}>
            <button className={`h-full w-full pl-[1px] text-left ${raised}`}>User Parameters :</button>
          </div>
          <div className={`ml-[3px] w-[127px] ${box}`}>
            <Field label="User parameters" value="no_hasl_25g" className={`h-full ${sunken}`} />
          </div>
        </div>
        <div className="mx-[3px] mt-[1px] flex h-[407px] flex-col overflow-hidden border-2 border-t-[#2f6f5f] border-r-[#a5efdc] border-b-[#a5efdc] border-l-[#2f6f5f]">
          <DrillTable />
        </div>
        <div className="mx-[3px] mt-1 flex h-[14px] items-center border-2 border-t-[#2f6f5f] border-l-[#2f6f5f] border-b-[#a5efdc] border-r-[#a5efdc] bg-[#42ad94]">
          <svg viewBox="0 0 10 8" className="h-[9px] w-3"><path d="M10 0v8L0 4z" fill="#53cfb0" stroke="#2f6f5f" /></svg>
          <div className={`h-[10px] w-[668px] ${raisedTeal}`} />
          <svg viewBox="0 0 10 8" className="ml-auto h-[9px] w-3"><path d="M0 0v8l10-4z" fill="#8fe8d0" stroke="#2f6f5f" /></svg>
        </div>
        <div className="mt-[6px] flex h-[34px] items-center border-b border-black">
          <div className="mr-[3px] flex h-full w-[41px] items-center border border-black bg-[#ffc74f] pl-1 text-xs">T09</div>
          <div className="flex gap-[3px] bg-black p-[2px]">
            <button className={`w-[55px] ${nav}`}>First</button>
            <button className={`w-[32px] ${nav}`}>&lt;--</button>
            <button className={`w-[32px] ${nav}`}>--&gt;</button>
            <button className={`w-[45px] ${nav}`}>Last</button>
          </div>
          <label htmlFor="index" className="ml-1">Index:</label>
          <input id="index" className="ml-[3px] h-7 w-[60px] border-2 border-t-[#2f6f5f] border-l-[#2f6f5f] border-b-[#a5efdc] border-r-[#a5efdc] outline-none" />
          <div className="ml-[2px] flex gap-[3px] bg-black p-[2px]">
            {["M12 4a5 5 0 0 1 3 9v5H9v-5a5 5 0 0 1 3-9z", "M5 6h11l-4 5 6 2-4 6H6", "M12 4a5 5 0 0 1 3 9v5H9v-5a5 5 0 0 1 3-9z"].map((d, i) => (
              <button key={i} aria-label={["Highlight", "Path", "Clear highlight"][i]} className={`flex h-7 w-[27px] items-center justify-center ${raised}`}>
                <svg viewBox="0 0 24 24" className="h-[17px] w-[17px] border border-black" fill="none" stroke="#000" strokeWidth="1.500">
                  <path d={d} />
                  {i === 2 && <path d="m3 3 18 18M21 3 3 21" stroke="#e01010" strokeWidth="3" />}
                </svg>
              </button>
            ))}
          </div>
          <div className={`ml-auto h-full w-[88px] pl-[6px] ${box}`}>
            <Motif label="Units" value="ml/my" className={`h-full ${raised}`} />
          </div>
          <div className={`h-full w-[115px] pl-[6px] ${box}`}>
            <Motif label="Display" value="Regular" className={`h-full ${raised}`} />
          </div>
        </div>
        <div className="mt-1 flex h-[34px] border-y border-black">
          <div className={`ml-auto w-[132px] ${box}`}>
            <button className={`h-full w-full ${raised}`}>Combine Tools</button>
          </div>
          <div className={`flex w-[419px] items-center ${box}`}>
            <span className="w-[142px] pl-[7px]">Merge Tools :</span>
            <Motif label="Merge action" value="Update Tools Numbers" className={`h-full flex-1 ${raised}`} />
            <button className={`ml-1 h-full w-[55px] ${raised}`}>Merge</button>
          </div>
        </div>
        <div className="grid grid-cols-4 gap-[3px] bg-black p-[2px]">
          {["Apply", "Calc Drills", "Update Table", "Close"].map((t) => (
            <button key={t} className={`h-7 ${raised}`}>{t}</button>
          ))}
        </div>
      </div>
    </Frame>
  );
}

/* ---------- spreadsheet ---------- */

function Drop() {
  return (
    <svg viewBox="0 0 5 3" className="h-[3px] w-[5px] shrink-0">
      <path d="M0 0h5L2.500 3z" fill="#4a6fa8" />
    </svg>
  );
}

function Group({ label, width, launcher, children }: { label: string; width: string; launcher?: boolean; children: ReactNode }) {
  return (
    <div className={`flex h-[102px] shrink-0 flex-col rounded-sm border border-[#a9c3e4] bg-[linear-gradient(#dbe7f6,#c9dbf0_30%,#d6e5f6)] ${width}`}>
      <div className="flex-1">{children}</div>
      <div className="relative h-[19px] bg-[#c1d8f0] text-center leading-[18px] text-[#3e6aaa]">
        {label}
        {launcher && (
          <svg viewBox="0 0 8 8" className="absolute top-[3px] right-1 h-2 w-2" fill="none" stroke="#7a9ac8">
            <path d="M0 6V0h6M3 3l4 4M7 4v3H4" />
          </svg>
        )}
      </div>
    </div>
  );
}

function Lines({ rows, on, label }: { rows: number[][]; on?: boolean; label: string }) {
  return (
    <button aria-label={label} className={`flex h-5 flex-1 items-center justify-center ${on ? "bg-[linear-gradient(#ffe0a8,#ffb854)]" : ""}`}>
      <svg viewBox="0 0 16 16" className="h-4 w-4" stroke="#000" strokeWidth="1.200">
        {rows.map(([x, y, w]) => (
          <path key={y} d={`M${x} ${y}h${w}`} />
        ))}
      </svg>
    </button>
  );
}

const strip = "flex items-center rounded-xs border border-[#9ab8dc]";

function Ribbon() {
  return (
    <div className="flex h-[106px] gap-[3px] rounded border border-[#b8d0ee] bg-[#d4e4f7] p-[1px] text-xs text-[#15428b]">
      <Group label="剪贴板" width="w-[72px]" launcher>
        <div className="flex gap-2 pt-[4px] pl-[10px]">
          <button className="flex flex-col items-center">
            <svg viewBox="0 0 28 32" className="h-[32px] w-7">
              <rect x="1" y="3" width="23" height="26" rx="2" fill="#e8b65a" stroke="#a87820" />
              <rect x="7" y="0" width="11" height="6" rx="2" fill="#c8ccd4" stroke="#666" />
              <path d="M10 12h11l6 6v13H10z" fill="#fff" stroke="#7a8aa0" />
              <path d="M13 18h8M13 21h11M13 24h11M13 27h11" stroke="#8aa4cc" />
            </svg>
            <span className="mt-[2px] mb-[6px] leading-4">粘贴</span>
            <Drop />
          </button>
          <div className="flex flex-col gap-[8px] pt-[2px]">
            <svg viewBox="0 0 14 14" className="h-[14px] w-[14px]" fill="none" stroke="#2a55a8" strokeWidth="1.500">
              <path d="m5 0 3 9M9 0 6 9" stroke="#555" />
              <circle cx="4" cy="11" r="2" />
              <circle cx="10" cy="11" r="2" />
            </svg>
            <svg viewBox="0 0 16 14" className="h-[14px] w-4" fill="#e8f0ff" stroke="#3a62b0">
              <path d="M1 1h7v9H1zM7 4h7v9H7zM9 7h4M9 9h4" />
            </svg>
            <svg viewBox="0 0 16 14" className="h-[14px] w-4">
              <path d="m15 0-6 5 2 2z" fill="#556" />
              <path d="m8 4 4 4-4 5-7-4z" fill="#e8c860" stroke="#a08020" />
            </svg>
          </div>
        </div>
      </Group>
      <Group label="字体" width="w-[151px]" launcher>
        <div className="px-[3px] pt-[4px]">
          <div className="flex h-[25px] border border-[#abc5e8] bg-[#eef5fd] text-sm text-black">
            <div className="flex flex-1 items-center justify-between border-r border-[#abc5e8] px-[3px] text-xs">
              宋体 <Drop />
            </div>
            <div className="flex w-[46px] items-center justify-between px-[3px] text-xs">
              10 <Drop />
            </div>
          </div>
          <div className="mt-[3px] flex gap-1 font-['Liberation_Serif',serif] text-black">
            <div className={`h-[22px] w-[79px] justify-around ${strip}`}>
              <button className="text-sm font-bold">B</button>
              <button className="text-sm font-bold italic">I</button>
              <button className="text-sm font-bold underline">U</button>
              <Drop />
            </div>
            <div className={`h-[22px] w-[44px] justify-around ${strip}`}>
              <button aria-label="Grow font" className="flex items-center text-base leading-4 font-bold">
                A
                <svg viewBox="0 0 5 14" className="h-[14px] w-[5px]"><path d="M0 3h5L2.500 0z" fill="#2a55a8" /></svg>
              </button>
              <button aria-label="Shrink font" className="flex items-center text-xs leading-4 font-bold">
                A
                <svg viewBox="0 0 5 14" className="h-[14px] w-[5px]"><path d="M0 0h5L2.500 3z" fill="#2a55a8" /></svg>
              </button>
            </div>
          </div>
          <div className="mt-[2px] flex gap-1 text-black">
            <div className={`h-[22px] w-[35px] justify-around ${strip}`}>
              <svg viewBox="0 0 13 13" className="h-[13px] w-[13px]" fill="none" stroke="#556" strokeDasharray="1 1">
                <path d="M0 .5h13M0 6.500h13M.5 0v13M6.500 0v13M12.500 0v13" />
                <path d="M0 12.500h13" stroke="#000" strokeDasharray="none" />
              </svg>
              <Drop />
            </div>
            <div className={`h-[22px] w-[67px] justify-around ${strip}`}>
              <svg viewBox="0 0 16 16" className="h-4 w-4">
                <path d="m7 1 6 5-6 5-5-5z" fill="#e8eef8" stroke="#446" />
                <path d="M13 6q3 2 1 5z" fill="#2a55a8" />
                <rect x="0" y="12" width="15" height="4" fill="#ffff00" />
              </svg>
              <Drop />
              <span className="border-b-4 border-[#f00000] px-[3px] font-['Liberation_Serif',serif] text-sm leading-[13px] font-bold text-[#2a55a8]">A</span>
              <Drop />
            </div>
            <div className={`h-[22px] w-[34px] justify-around ${strip}`}>
              <span className="flex flex-col text-center text-[9px] leading-[9px] text-[#223]">
                wén<span className="text-[#2a55a8]">文</span>
              </span>
              <Drop />
            </div>
          </div>
        </div>
      </Group>
      <Group label="对齐方式" width="w-[112px]" launcher>
        <div className="flex flex-col gap-[3px] px-[3px] pt-[5px]">
          <div className="flex gap-1">
            <div className={`w-[69px] ${strip}`}>
              <Lines label="Top" rows={[[1, 3, 14], [3, 6, 10], [1, 9, 14]]} />
              <Lines label="Middle" on rows={[[1, 5, 14], [3, 8, 10], [1, 11, 14]]} />
              <Lines label="Bottom" rows={[[1, 8, 14], [3, 11, 10], [1, 14, 14]]} />
            </div>
            <button aria-label="Wrap" className="flex h-[22px] w-[22px] items-center justify-center rounded-xs border border-[#c09040] bg-[#ffd28a]">
              <svg viewBox="0 0 16 16" className="h-4 w-4" fill="#eef" stroke="#5a6a88">
                <path d="M1 1h11v4H1zM1 9h9v4H1zM12 3h3v8h-4M13 9l-2 2 2 2" />
              </svg>
            </button>
          </div>
          <div className="flex gap-1">
            <div className={`w-[69px] ${strip}`}>
              <Lines label="Left" on rows={[[1, 2, 14], [1, 5, 9], [1, 8, 14], [1, 11, 9], [1, 14, 14]]} />
              <Lines label="Center" rows={[[1, 2, 14], [4, 5, 8], [1, 8, 14], [4, 11, 8], [1, 14, 14]]} />
              <Lines label="Right" rows={[[1, 2, 14], [6, 5, 9], [1, 8, 14], [6, 11, 9], [1, 14, 14]]} />
            </div>
            <button aria-label="Merge cells" className="flex h-[22px] w-[31px] items-center justify-around rounded-xs border border-[#c09040] bg-[#ffd28a] text-black">
              <svg viewBox="0 0 16 14" className="h-[14px] w-4">
                <path d="M1 1h14v12H1zM1 4h14M1 10h14M8 1v3M8 10v3" fill="#eef" stroke="#5a6a88" />
                <path d="M1 7h4M11 7h4M3 5 1 7l2 2M13 5l2 2-2 2" stroke="#222" fill="none" />
                <text x="6" y="9" fontSize="7" fontWeight="bold">a</text>
              </svg>
              <Drop />
            </button>
          </div>
          <div className="flex gap-1">
            <div className={`w-[45px] ${strip}`}>
              <Lines label="Outdent" rows={[[1, 2, 14], [7, 5, 8], [7, 8, 8], [7, 11, 8], [1, 14, 14]]} />
              <Lines label="Indent" rows={[[1, 2, 14], [6, 5, 9], [8, 8, 7], [6, 11, 9], [1, 14, 14]]} />
            </div>
            <div className={`h-[22px] w-[32px] justify-around text-black ${strip}`}>
              <span className="-rotate-45 text-[11px] leading-3">ab</span>
              <Drop />
            </div>
          </div>
        </div>
      </Group>
      <Group label="数字" width="w-[89px]" launcher>
        <div className="px-[3px] pt-[4px] text-black">
          <div className="flex h-[25px] items-center justify-between border border-[#abc5e8] bg-[#eef5fd] px-[3px]">
            常规 <Drop />
          </div>
          <div className={`mt-[3px] h-[22px] justify-around ${strip}`}>
            <svg viewBox="0 0 16 14" className="h-[14px] w-4">
              <rect x="0" y="0" width="14" height="8" fill="#3a72c8" stroke="#224" />
              <circle cx="7" cy="4" r="2" fill="#cde" />
              <path d="M8 8h8v2H8zM7 11h8v2H7z" fill="#e8a820" />
            </svg>
            <Drop />
            <button>%</button>
            <button className="font-bold">,</button>
          </div>
          <div className={`mt-[2px] h-[22px] w-[48px] justify-around text-[8px] leading-[8px] ${strip}`}>
            <span>←.0<br />.00</span>
            <span>.00<br />→.0</span>
          </div>
        </div>
      </Group>
      <Group label="样式" width="w-[116px]">
        <div className="flex flex-col gap-[2px] pt-[3px] pl-[6px]">
          {["条件格式", "套用表格格式", "单元格样式"].map((t, i) => (
            <button key={t} className="flex h-5 items-center gap-[3px] whitespace-nowrap">
              <svg viewBox="0 0 16 16" className="h-4 w-4" stroke="#3a62b0" fill="#dfe9fa">
                <path d="M1 1h13v12H1zM1 5h13M1 9h13M5 1v12M10 1v12" />
                {i === 0 ? <path d="M5 1h5v8H5z" fill="#d84030" /> : <path d="m15 5-7 8-2 2 1-4 7-7z" fill="#f0c860" />}
              </svg>
              {t} <Drop />
            </button>
          ))}
        </div>
      </Group>
      <Group label="单元格" width="w-[68px]">
        <div className="flex flex-col gap-[2px] pt-[3px] pl-[6px]">
          {["插入", "删除", "格式"].map((t, i) => (
            <button key={t} className="flex h-5 items-center gap-[3px]">
              <svg viewBox="0 0 16 16" className="h-4 w-4" stroke="#445a88" fill="#fff">
                {i === 2 ? <path d="M1 3h14v11H1zM1 7h14M1 10h14M5 3v11M11 3v11M3 1h9" /> : <path d="M1 1h6v4H1zM1 11h6v4H1zM1 6h4v4H1zM10 6h5v3h-5z" />}
                {i === 1 && <path d="m8 3 6 7M14 3l-6 7" stroke="#e02020" strokeWidth="2" />}
              </svg>
              {t} <Drop />
            </button>
          ))}
        </div>
      </Group>
      <Group label="编辑" width="w-[125px]">
        <div className="flex gap-[7px] pt-[3px] pl-[7px]">
          <div className="flex flex-col gap-[2px]">
            <button aria-label="Sum" className="flex h-5 w-6 items-center justify-between">
              <span className="font-['Liberation_Serif',serif] text-base font-bold text-black">Σ</span> <Drop />
            </button>
            <button aria-label="Fill" className="flex h-5 w-6 items-center justify-between">
              <svg viewBox="0 0 14 14" className="h-[14px] w-[14px]">
                <rect x=".5" y=".5" width="12" height="13" fill="#fff" stroke="#3a62b0" />
                <path d="M5 4h3v4h3l-4.500 4L2 8h3z" fill="#3a72d8" />
              </svg>
              <Drop />
            </button>
            <button aria-label="Clear" className="flex h-5 w-6 items-center justify-between">
              <svg viewBox="0 0 14 12" className="h-3 w-[14px]">
                <path d="m1 9 6-7 6 1-6 8H3z" fill="#f4f4fa" stroke="#556" />
              </svg>
              <Drop />
            </button>
          </div>
          <button className="flex flex-col items-center">
            <svg viewBox="0 0 30 30" className="h-[30px] w-[30px]">
              <path d="m1 13 4-12 4 12M3 9h5" fill="none" stroke="#2a55a8" strokeWidth="2" />
              <path d="M2 17h8L2 28h9" fill="none" stroke="#c02828" strokeWidth="2" />
              <path d="M10 5h19l-8 9v11l-4 2V14z" fill="#b8bcc4" stroke="#888" />
            </svg>
            <span className="mt-[4px] leading-4">排序和</span>
            <span className="flex items-center gap-1 leading-4">筛选 <Drop /></span>
          </button>
          <button className="flex flex-col items-center">
            <svg viewBox="0 0 30 30" className="h-[30px] w-[30px]" fill="#6a8cc4" stroke="#2a3f70">
              <path d="M7 3h5l1 6v4H5V9zM17 3h5l3 6v4h-8zM13 9h4v6h-4z" />
              <rect x="2" y="13" width="11" height="13" rx="2" />
              <rect x="17" y="13" width="11" height="13" rx="2" />
            </svg>
            <span className="mt-[4px] leading-4">查找和</span>
            <span className="flex items-center gap-1 leading-4">选择 <Drop /></span>
          </button>
        </div>
      </Group>
    </div>
  );
}

function Sheet() {
  const cols = ["A", "B", "C", "D", "E", "F", "G", "H", "I"];
  return (
    <div className={`relative h-[540px] overflow-hidden bg-white ${song}`}>
      <table className="w-[756px] table-fixed border-separate border-spacing-0">
        <colgroup>
          <col className="w-[34px]" />
          <col className="w-[57px]" />
          <col className="w-[55px]" />
          <col className="w-[166px]" />
          <col className="w-[32px]" />
          <col className="w-[80px]" />
          <col className="w-[54px]" />
          <col className="w-[50px]" />
          <col className="w-[88px]" />
          <col className="w-[140px]" />
        </colgroup>
        <thead>
          <tr className="h-[19px] text-[15px] leading-[17px]">
            <th className="bg-[#a9c4e9] p-0">
              <svg viewBox="0 0 10 10" className="mr-1 ml-auto h-[10px] w-[10px]"><path d="M10 0v10H0z" fill="#e4edf9" /></svg>
            </th>
            {cols.map((c, i) => (
              <th
                key={c}
                className={`border-r border-b p-0 font-normal ${
                  i > 1 ? "border-[#f0953c] bg-[linear-gradient(#f9d79b,#f2b95c)] text-[#4a3c20]" : "border-[#9eb6ce] bg-[linear-gradient(#f6fafb,#d6dde8)] text-[#27413e]"
                }`}
              >
                {c}
              </th>
            ))}
          </tr>
        </thead>
        <tbody>
          {notes.map((note, i) => (
            <tr key={note} className="h-[44px]">
              <th
                className={`border-r border-b p-0 align-bottom text-[15px] leading-4 font-normal text-[#27413e] ${
                  i === 4 ? "border-[#f0953c] bg-[#ffd58d]" : i === 1 ? "border-[#9eb6ce] bg-[#b6c2d2]" : "border-[#9eb6ce] bg-[#e4ecf7]"
                }`}
              >
                {16 + i}
              </th>
              {i === 0 && (
                <td rowSpan={12} className="border-r border-black p-0 pt-[68px] text-center align-top text-base leading-5 font-bold">
                  CAM
                  <br />
                  指示
                </td>
              )}
              <td className="border-r border-b border-black p-0 pt-[2px] text-center text-base leading-5 font-bold">{9 + i}</td>
              <td
                colSpan={7}
                className={`p-0 pl-[3px] text-[13px] leading-[18px] whitespace-nowrap ${
                  i === 11 ? "border-b border-black bg-[#ffff00]" : i === 3 || i === 4 ? "border-b-[3px] border-double border-black" : "border-b border-black"
                }`}
              >
                {note}
              </td>
            </tr>
          ))}
        </tbody>
      </table>
      <div className="absolute top-[193px] left-[81px] h-[45px] w-[475px] border-2 border-[#e01010] shadow-md" />
    </div>
  );
}

function SheetTabs() {
  return (
    <div className="flex h-[17px] items-stretch bg-[#7a96c4] text-xs text-[#15428b]">
      <div className="flex w-[62px] items-center justify-around border-r border-[#8aa4cc] bg-[#cfe0f5]">
        {["M2 1v8M9 1v8L4 5z", "M8 1v8L3 5z", "M3 1v8l5-4z", "M1 1v8l5-4zM9 1v8"].map((d) => (
          <button key={d} aria-label="Scroll sheets">
            <svg viewBox="0 0 10 10" className="h-[9px] w-[9px]" fill="#15428b" stroke="#15428b"><path d={d} /></svg>
          </button>
        ))}
      </div>
      <div className={`flex w-[398px] overflow-hidden bg-[#b9d0ef] ${mono}`}>
        <a href="#sheet" className="w-[46px] shrink-0 bg-white pl-2 text-sm leading-[17px]">指示</a>
        {[1, 2, 3, 4, 5].map((n) => (
          <a key={n} href={`#fig${n}`} className="flex w-[79px] shrink-0 bg-[#cfe0f5] leading-[17px] whitespace-nowrap">
            <svg viewBox="0 0 9 17" className="h-[17px] w-[9px]"><path d="M0 17 9 0" stroke="#6a8cc0" fill="none" /></svg>
            图{n}(fig{n})
          </a>
        ))}
      </div>
      <div className="flex w-[50px] items-center justify-between bg-[#8aa4d0] pl-2">
        <svg viewBox="0 0 5 8" className="h-2 w-[5px]"><path d="M5 0v8L0 4z" fill="#24406c" /></svg>
        <div className="flex h-[15px] w-[26px] items-center justify-center gap-[1px] rounded-sm border border-[#6a7ea8] bg-[linear-gradient(#f4f4f6,#c0c6d0)]">
          {[0, 1, 2, 3].map((n) => (
            <span key={n} className="h-[7px] w-px bg-[#667]" />
          ))}
        </div>
      </div>
    </div>
  );
}

function StatusBar() {
  return (
    <div className="flex h-[23px] items-center border-t border-[#6f93cc] bg-[linear-gradient(#d0e2f8,#a6c4ec_60%,#b9d3f4)] text-xs text-[#15428b]">
      <span className="w-10 border-r border-[#8fb0dc] pl-[7px]">就绪</span>
      <span className="h-full w-[472px] border-r border-[#7a9ccf]" />
      <div className="ml-[6px] flex rounded-sm border border-[#7a9ccf]">
        {["M2 2h12v11H2zM2 6h12M2 9h12M6 2v11M10 2v11", "M3 2h10v12H3zM5 5h6M5 8h6M5 11h6", "M2 2h12v11H2zM8 2v7M4 2v7h8"].map((d, i) => (
          <button key={d} aria-label={["Normal", "Page layout", "Page break"][i]} className={i === 0 ? "bg-[#ffd28a] px-[1px]" : "bg-[#c4cfdf] px-[1px]"}>
            <svg viewBox="0 0 16 16" className="h-4 w-4" fill="#f4f8ff" stroke="#445a80"><path d={d} /></svg>
          </button>
        ))}
      </div>
      <span className="ml-2 w-[34px]">100%</span>
      <button aria-label="Zoom out" className="ml-[6px] flex h-4 w-4 items-center justify-center rounded-full border border-[#557] bg-[#e4e8f0]">
        <span className="h-[2px] w-2 bg-[#334]" />
      </button>
      <div className="relative h-4 w-[110px]">
        <span className="absolute top-[7px] h-px w-full bg-[#4a6494]" />
        <svg viewBox="0 0 10 14" className="absolute top-[1px] left-[46px] h-[14px] w-[10px]"><path d="M1 1h8v8l-4 4-4-4z" fill="#e4e8f0" stroke="#445" /></svg>
      </div>
    </div>
  );
}

function Excel() {
  return (
    <section className={`absolute top-[153px] left-[1174px] w-[782px] rounded-t-md border border-[#a8b0b8] bg-[linear-gradient(90deg,#5c6468_0,#3a4a50_12%,#04060a_18%,#04060a_56%,#2c5c64_60%,#4c8088_75%,#50808a)] px-[5px] shadow-2xl ${yahei}`}>
      <div className="relative flex h-7 items-center text-xs">
        <svg viewBox="0 0 36 36" className="absolute top-[7px] left-[3px] z-10 h-9 w-9">
          <circle cx="18" cy="18" r="17" fill="#e4e6ec" stroke="#9aa4b4" />
          <path d="M5 16a14 14 0 0 1 26 0z" fill="#f8f9fb" />
          <g fill="none" strokeWidth="2">
            <rect x="8" y="8" width="9" height="9" rx="1" stroke="#e0501c" strokeWidth="3" />
            <rect x="20" y="12" width="6" height="6" rx="1" stroke="#3a90d8" />
            <rect x="10" y="20" width="8" height="8" rx="1" stroke="#f0a820" />
            <rect x="20" y="20" width="8" height="8" rx="1" stroke="#58a828" />
          </g>
        </svg>
        <div className="ml-[40px] flex h-[21px] w-[38px] items-center justify-center rounded-r-full border border-[#889] bg-[#6a7478]">
          <svg viewBox="0 0 14 14" className="h-[14px] w-[14px]">
            <path d="M0 0h14v14H0z" fill="#4850b8" />
            <path d="M3 0h8v7H3z" fill="#fff" />
            <path d="M4 9h6v5H4z" fill="#dde" />
          </svg>
        </div>
        <svg viewBox="0 0 6 7" className="ml-2 h-[7px] w-[6px]"><path d="M0 0h6v1H0zM0 3h6L3 6z" fill="#cfe0f5" /></svg>
        <h2 className="ml-[141px] rounded-xl bg-[#8a9096]/70 px-2 leading-[18px] whitespace-pre text-black">6S71902LA0-预审指示.xls  [兼容模式] - Microsoft Excel</h2>
        <div className="mr-[18px] mb-auto ml-auto flex rounded-b border border-t-0 border-[#dfe6ea] bg-[#506068]">
          <button aria-label="Minimize" className="flex h-[18px] w-7 items-center justify-center border-r border-[#dfe6ea]">
            <span className="mt-[5px] h-1 w-[11px] bg-white" />
          </button>
          <button aria-label="Maximize" className="flex h-[18px] w-[27px] items-center justify-center border-r border-[#dfe6ea]">
            <span className="h-[9px] w-[11px] border-2 border-white" />
          </button>
          <button aria-label="Close window" className="flex h-[18px] w-5 items-center justify-center bg-[#b83820]" />
        </div>
      </div>
      <div className="border-t border-black bg-[#bfdbff]">
        <div className="flex h-[27px] items-stretch pl-[47px] text-xs leading-[25px] text-[#15428b]">
          {["开始", "插入", "页面布局", "公式", "数据", "审阅", "视图"].map((t, i) => (
            <button key={t} className={i === 0 ? "mt-[2px] rounded-t border border-b-0 border-[#8db2e3] bg-[#e8f1fc] px-[11px]" : i === 6 ? "pl-[12px]" : i === 1 ? "pr-[14px] pl-[16px]" : "px-[14px]"}>
              {t}
            </button>
          ))}
          <span className="mr-[42px] ml-auto flex items-center gap-3">
            <span className="flex h-[13px] w-[13px] items-center justify-center rounded-full border border-[#15428b] bg-[#3a6cc8] text-[10px] leading-none font-bold text-white">?</span>
            <span className="mt-1 h-[2px] w-2 bg-[#5a6c88]" />
          </span>
        </div>
        <Ribbon />
        <div className="mt-[5px] ml-[1px] flex h-[34px] items-center border border-[#9ebbe0] bg-[linear-gradient(#eef6ff,#fdfeff)] text-xs text-[#15428b]">
          <svg viewBox="0 0 14 16" className="ml-1 h-4 w-[14px]">
            <path d="M7 1 13 3v5q0 5-6 7-6-2-6-7V3z" fill="#f59a20" stroke="#a85808" />
            <path d="M7 1 1 3v5h6z" fill="#fccf60" />
          </svg>
          <b className="ml-[11px]">安全警告</b>
          <span className="ml-3">部分活动内容已被禁用。</span>
          <button className="ml-[10px] h-[21px] w-[70px] border border-[#9ebbe0] bg-white">选项...</button>
        </div>
        <div className="mt-[5px] flex h-5 items-center border-t border-[#4a6494] bg-[#dfe9f7]">
          <div className={`flex h-full w-[161px] items-center border-b border-[#4a6494] bg-white text-sm ${song}`}>
            <span className="flex-1 text-center">C20</span>
            <svg viewBox="0 0 7 4" className="mr-[6px] h-1 w-[7px]"><path d="M0 0h7L3.500 4z" /></svg>
          </div>
          <div className="flex h-[18px] w-[76px] items-center justify-between rounded-l-full border border-[#8ba8d4] bg-[linear-gradient(#dfe9f7,#a9c0e4)] pr-[5px] pl-1">
            <span className="h-[9px] w-[9px] rounded-full bg-[#8c9cb8]" />
            <i className="font-['Liberation_Serif',serif] text-sm font-bold text-[#444]">fx</i>
          </div>
          <input
            aria-label="Formula"
            defaultValue={notes[4]}
            className={`h-full flex-1 border-b border-[#4a6494] bg-white pb-[2px] pl-3 text-[15px] outline-none ${song}`}
          />
        </div>
        <div className="h-1 bg-[#cfe0f5]" />
        <Sheet />
        <SheetTabs />
        <StatusBar />
      </div>
      <div className="h-1 bg-[#8fb8c8]" />
    </section>
  );
}

export default function App() {
  return (
    <div className="relative flex h-screen w-full overflow-hidden bg-black text-black">
      <div className="flex min-w-0 flex-1 flex-col">
        <Header />
        <main className="flex min-h-0 flex-1">
          <Sidebar />
          <div className="flex min-w-0 flex-1 flex-col">
            <div className="flex min-h-0 flex-1">
              <div className="min-w-0 flex-1">
                <Board />
              </div>
              <div className="grid w-[163px] shrink-0 grid-cols-[repeat(4,38px)] content-start gap-[2px] border-l-2 border-[#2f6f5f] bg-black pt-[3px] pl-[1px]">
                {["up", "down", "home", "xy", "left", "right", "undo", "snake", "shrink", "expand", "ratio", "question"].map((n) => (
                  <ToolButton key={n} name={n} />
                ))}
              </div>
            </div>
            <div className="h-[34px] shrink-0 border-b-[3px] border-[#2f5f58] bg-[#ffffcc]" />
          </div>
        </main>
      </div>
      <div className="w-2 shrink-0 bg-[linear-gradient(#7ecfd6_0,#9bf0f4_6%,#3a4a54_7%,#8a98a4_20%)]" />
      <PopviewOne />
      <PopviewTwo />
      <DrillManager />
      <div className="absolute top-[485px] left-[81px] h-[46px] w-[761px] border-2 border-[#d01818] shadow-md" />
      <Excel />
    </div>
  );
}
